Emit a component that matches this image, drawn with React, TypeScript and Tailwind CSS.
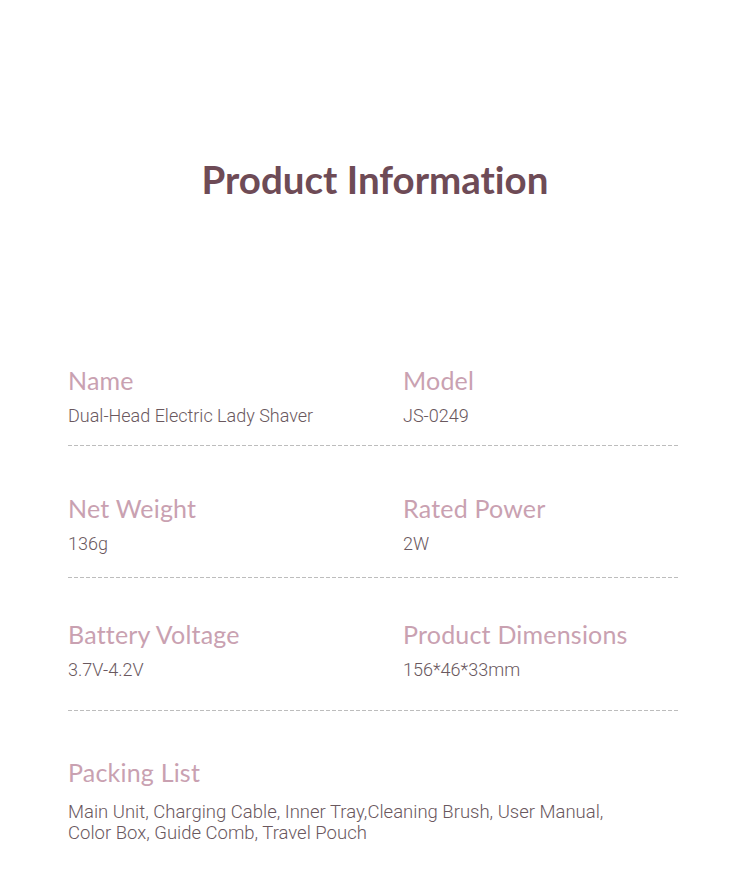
export default function App() {
  const rows = [
    { a: ['Name', 'Dual-Head Electric Lady Shaver'], b: ['Model', 'JS-0249'], top: 'mt-[163px]', gap: 'mt-[17px]' },
    { a: ['Net Weight', '136g'], b: ['Rated Power', '2W'], top: 'mt-[47px]', gap: 'mt-[21px]' },
    { a: ['Battery Voltage', '3.7V-4.2V'], b: ['Product Dimensions', '156*46*33mm'], top: 'mt-[41px]', gap: 'mt-[28px]' },
  ];

  return (
    <div className="w-[750px] min-h-[881px] bg-white font-['Lato',sans-serif] [font-variant-ligatures:none]">
      <div className="pt-[156px] text-center">
        <h1 className="text-[38.5px] leading-[46px] font-bold text-[#6e4b56]">Product Information</h1>
      </div>

      <div className="pl-[68px] pr-[72px]">
        {rows.map((row, i) => (
          <div key={i} className={row.top}>
            <div className="flex">
              {[row.a, row.b].map((cell, j) => (
                <div key={j} className={j === 0 ? 'w-[335px]' : 'flex-1'}>
                  <div className="text-[25px] leading-[30px] tracking-[0.2px] text-[#c9a1b1]">{cell[0]}</div>
                  <div className="mt-[9px] text-[18px] leading-[24px] font-light text-[#6a585e] font-['Roboto',sans-serif]">
                    {cell[1]}
                  </div>
                </div>
              ))}
            </div>
            <div className={`${row.gap} h-px w-full bg-[linear-gradient(to_right,#bdbdbd_4px,transparent_4px)] bg-[length:6px_1px]`} />
          </div>
        ))}

        <div className="mt-[46px]">
          <div className="text-[25px] leading-[30px] tracking-[0.2px] text-[#c9a1b1]">Packing List</div>
          <div className="mt-[15px] text-[18.5px] leading-[21px] font-light text-[#6a585e] font-['Roboto',sans-serif]">
            Main Unit, Charging Cable, Inner Tray,Cleaning Brush, User Manual,
            <br />
            Color Box, Guide Comb, Travel Pouch
          </div>
        </div>
      </div>
    </div>
  );
}
